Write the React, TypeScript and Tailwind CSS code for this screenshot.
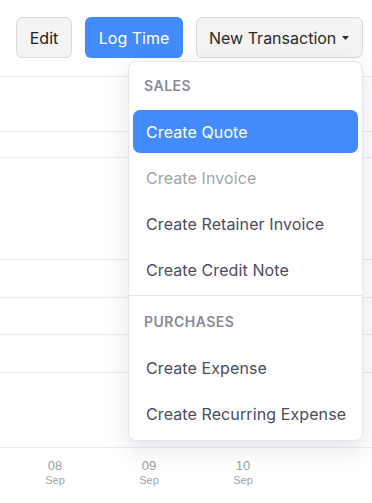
import React from "react";

const rows = [77, 55, 26, 102, 38, 37, 38, 75];

function Item({ label, active, disabled }: { label: string; active?: boolean; disabled?: boolean }) {
  return (
    <div
      className={
        "h-[43px] mt-[3px] flex items-center pl-[13px] rounded-[7px] text-[16px] tracking-[0.1px] " +
        (active ? "bg-[#438bfb] text-white" : disabled ? "text-[#a3a3a8]" : "text-[#4a4c62]")
      }
    >
      {label}
    </div>
  );
}

function Header({ label }: { label: string }) {
  return (
    <div className="h-[43px] flex items-center pl-[11px] text-[14px] font-semibold text-[#8a8998] tracking-[0.5px]">
      {label}
    </div>
  );
}

export default function App() {
  return (
    <div
      className="relative w-[372px] h-[503px] bg-white overflow-hidden"
      style={{ fontFamily: "Inter, 'Noto Sans', sans-serif" }}
    >
      <div className="flex flex-col">
        {rows.map((h, i) => (
          <div key={i} className="border-b border-[#ebebf0] shrink-0" style={{ height: h }} />
        ))}
        <div className="flex pl-[8px] pt-[10px]" style={{ fontFamily: "'Liberation Sans', Arial, sans-serif" }}>
          {["08", "09", "10"].map((d) => (
            <div key={d} className="w-[94px] flex flex-col items-center text-[#a0a0a4]">
              <span className="text-[13px] leading-[16px]">{d}</span>
              <span className="text-[11px] leading-[13px] text-[#a3a3a8]">Sep</span>
            </div>
          ))}
        </div>
      </div>

      <div className="absolute top-[17px] right-[9px] flex gap-[13px]">
        <button className="h-[41px] w-[56px] rounded-[6px] border border-[#dcdcdc] bg-[#f3f3f3] text-[16px] text-[#222]">
          Edit
        </button>
        <button className="h-[41px] w-[98px] rounded-[6px] bg-[#438bfb] text-[16px] text-white">
          Log Time
        </button>
        <button className="h-[41px] w-[167px] rounded-[6px] border border-[#dcdcdc] bg-[#f3f3f3] text-[16px] text-[#2a2a2a] flex items-center pl-[12px] gap-[6px]">
          <span>New Transaction</span>
          <svg width="7" height="4" viewBox="0 0 7 4">
            <path d="M0 0 L7 0 L3.5 4 Z" fill="#2a2a2a" />
          </svg>
        </button>
      </div>

      <div className="absolute left-[128px] top-[61px] w-[235px] rounded-[8px] border border-[#e6e6ec] bg-white pt-[2px] pb-[5px] px-[4px] shadow-[0_8px_24px_rgba(40,40,70,0.13)]">
        <Header label="SALES" />
        <Item label="Create Quote" active />
        <Item label="Create Invoice" disabled />
        <Item label="Create Retainer Invoice" />
        <Item label="Create Credit Note" />
        <div className="-mx-[4px] mt-[4px] mb-[4px] border-t border-[#e6e6ec]" />
        <Header label="PURCHASES" />
        <Item label="Create Expense" />
        <Item label="Create Recurring Expense" />
      </div>
    </div>
  );
}
